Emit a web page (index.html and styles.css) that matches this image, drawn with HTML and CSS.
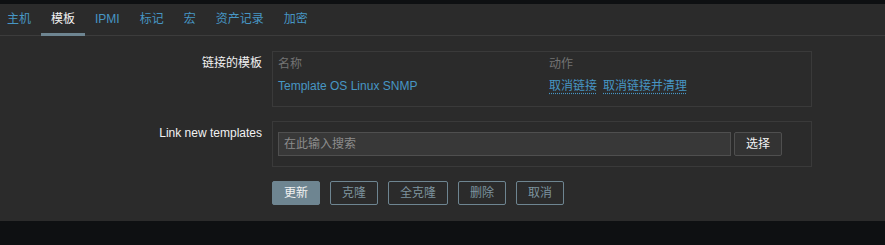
FILE: index.html
```html
<!DOCTYPE html>
<html lang="zh">
<head>
<meta charset="utf-8">
<link rel="stylesheet" href="styles.css">
</head>
<body>
<div class="panel">
  <ul class="tabs">
    <li class="tab">主机</li>
    <li class="tab active">模板</li>
    <li class="tab">IPMI</li>
    <li class="tab">标记</li>
    <li class="tab">宏</li>
    <li class="tab">资产记录</li>
    <li class="tab">加密</li>
  </ul>
  <div class="form">
    <div class="label">链接的模板</div>
    <div class="box linked">
      <div class="th">名称</div>
      <div class="th">动作</div>
      <div class="td"><span class="link">Template OS Linux SNMP</span></div>
      <div class="td"><span class="link action">取消链接</span><span class="link action">取消链接并清理</span></div>
    </div>
    <div class="label">Link new templates</div>
    <div class="box search">
      <div class="input">在此输入搜索</div>
      <div class="btn-grey">选择</div>
    </div>
    <div class="buttons">
      <div class="btn primary">更新</div>
      <div class="btn alt">克隆</div>
      <div class="btn alt">全克隆</div>
      <div class="btn alt">删除</div>
      <div class="btn alt">取消</div>
    </div>
  </div>
</div>
</body>
</html>
```
FILE: styles.css
```css
html, body {
  margin: 0;
  padding: 0;
  background: #0e1012;
  font-family: "Liberation Sans", Arial, "Noto Sans CJK SC", sans-serif;
  font-size: 12px;
  line-height: 14px;
  color: #f2f2f2;
}
.panel {
  margin-top: 4px;
  background: #2b2b2b;
  padding-bottom: 16px;
}
.tabs {
  list-style: none;
  margin: 0;
  padding: 0 0 0 0;
  height: 31px;
  border-bottom: 1px solid #3c3c3c;
  display: flex;
}
.tab {
  box-sizing: border-box;
  height: 32px;
  padding: 8px 10px 0;
  color: #4796c4;
  border-bottom: 3px solid transparent;
}
.tab:first-child {
  margin-left: -3px;
}
.tab.active {
  color: #f2f2f2;
  border-bottom-color: #6e8591;
}
.form {
  display: grid;
  grid-template-columns: 262px 540px;
  column-gap: 10px;
  row-gap: 14px;
  padding-top: 15px;
}
.label {
  text-align: right;
  padding-top: 5px;
}
.box {
  border: 1px solid #3a3a3a;
}
.linked {
  padding: 5px 5px;
  display: grid;
  grid-template-columns: 271px 1fr;
}
.th {
  color: #737373;
  padding-bottom: 8px;
}
.td {
  padding-bottom: 8px;
}
.link {
  color: #4796c4;
}
.action {
  text-decoration: underline dotted;
  text-underline-offset: 3px;
  margin-right: 6px;
}
.search {
  padding: 10px 5px;
  display: flex;
  gap: 3px;
}
.input {
  box-sizing: border-box;
  width: 453px;
  height: 24px;
  background: #383838;
  border: 1px solid #4f4f4f;
  color: #8c8c8c;
  padding: 4px 5px;
  line-height: 14px;
}
.btn-grey {
  box-sizing: border-box;
  width: 48px;
  height: 24px;
  background: #333333;
  border: 1px solid #4f4f4f;
  border-radius: 2px;
  text-align: center;
  padding-top: 4px;
  color: #f2f2f2;
}
.buttons {
  grid-column: 2;
  display: flex;
  gap: 10px;
}
.btn {
  box-sizing: border-box;
  height: 24px;
  padding: 4px 11px 0;
  border: 1px solid #6e8591;
  border-radius: 2px;
}
.primary {
  background: #6e8591;
  color: #f2f2f2;
}
.alt {
  color: #7d939e;
}
```
